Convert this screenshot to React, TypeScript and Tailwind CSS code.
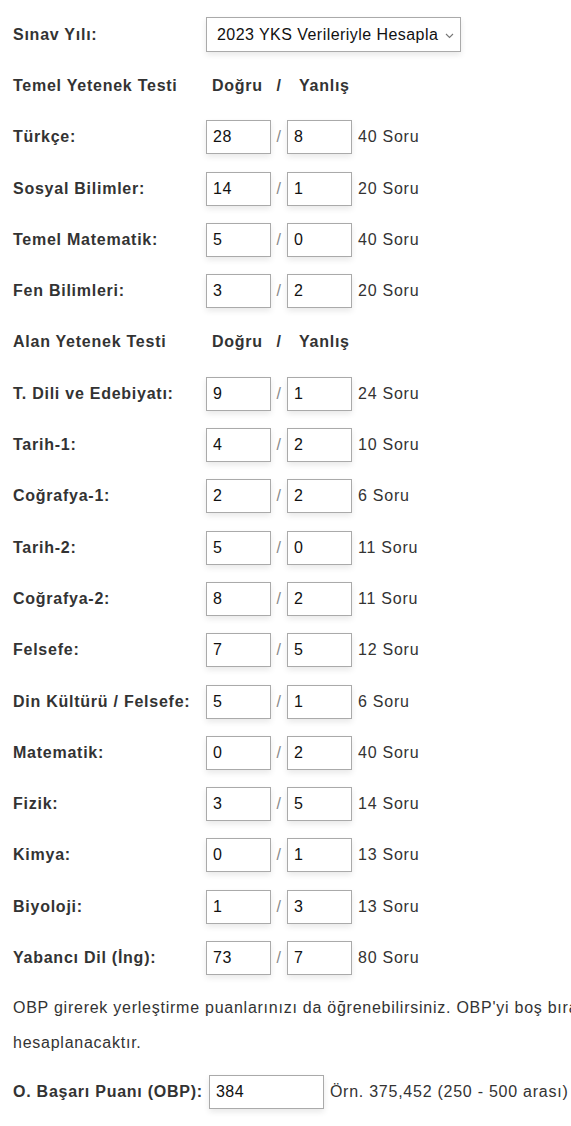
import React from "react";

type Row = { label: string; d: string; y: string; total: string };

const tyt: Row[] = [
  { label: "Türkçe:", d: "28", y: "8", total: "40 Soru" },
  { label: "Sosyal Bilimler:", d: "14", y: "1", total: "20 Soru" },
  { label: "Temel Matematik:", d: "5", y: "0", total: "40 Soru" },
  { label: "Fen Bilimleri:", d: "3", y: "2", total: "20 Soru" },
];

const ayt: Row[] = [
  { label: "T. Dili ve Edebiyatı:", d: "9", y: "1", total: "24 Soru" },
  { label: "Tarih-1:", d: "4", y: "2", total: "10 Soru" },
  { label: "Coğrafya-1:", d: "2", y: "2", total: "6 Soru" },
  { label: "Tarih-2:", d: "5", y: "0", total: "11 Soru" },
  { label: "Coğrafya-2:", d: "8", y: "2", total: "11 Soru" },
  { label: "Felsefe:", d: "7", y: "5", total: "12 Soru" },
  { label: "Din Kültürü / Felsefe:", d: "5", y: "1", total: "6 Soru" },
  { label: "Matematik:", d: "0", y: "2", total: "40 Soru" },
  { label: "Fizik:", d: "3", y: "5", total: "14 Soru" },
  { label: "Kimya:", d: "0", y: "1", total: "13 Soru" },
  { label: "Biyoloji:", d: "1", y: "3", total: "13 Soru" },
  { label: "Yabancı Dil (İng):", d: "73", y: "7", total: "80 Soru" },
];

const inputCls =
  "h-[34px] border border-[#aaaaaa] bg-white pl-[6px] text-[16px] tracking-[0.5px] text-[#111] outline-none shadow-[0_3px_6px_rgba(0,0,0,0.09)]";

function ScoreRow({ row }: { row: Row }) {
  return (
    <div className="flex h-[51.3px] items-center">
      <div className="w-[193px] shrink-0 font-bold">{row.label}</div>
      <input className={`${inputCls} w-[65px]`} value={row.d} readOnly />
      <span className="w-[16px] text-center text-[#888]">/</span>
      <input className={`${inputCls} w-[65px]`} value={row.y} readOnly />
      <span className="ml-[6px]">{row.total}</span>
    </div>
  );
}

function Header({ title }: { title: string }) {
  return (
    <div className="flex h-[51.3px] items-center font-bold">
      <div className="w-[193px] shrink-0">{title}</div>
      <span className="ml-[6px] w-[59px]">Doğru</span>
      <span className="w-[16px] text-center">/</span>
      <span className="ml-[12px]">Yanlış</span>
    </div>
  );
}

export default function App() {
  return (
    <div
      className="min-h-[1126px] w-full overflow-hidden bg-white text-[16px] tracking-[0.75px] text-[#333]"
      style={{ fontFamily: '"Liberation Sans", Arial, sans-serif' }}
    >
      <div className="pl-[13px] pt-[9px]">
        <div className="flex h-[51.3px] items-center">
          <div className="w-[193px] shrink-0 font-bold">Sınav Yılı:</div>
          <div className="relative flex h-[35px] w-[255px] items-center border border-[#aaaaaa] bg-white pl-[10px] tracking-[0.45px] text-[#111] shadow-[0_3px_6px_rgba(0,0,0,0.09)]">
            <span>2023 YKS Verileriyle Hesapla</span>
            <svg
              className="absolute right-[6px] top-[15px]"
              width="9"
              height="6"
              viewBox="0 0 9 6"
              fill="none"
            >
              <path d="M1 1l3.5 3.5L8 1" stroke="#777" strokeWidth="1.1" />
            </svg>
          </div>
        </div>

        <Header title="Temel Yetenek Testi" />
        {tyt.map((r) => (
          <ScoreRow key={r.label} row={r} />
        ))}
        <Header title="Alan Yetenek Testi" />
        {ayt.map((r) => (
          <ScoreRow key={r.label} row={r} />
        ))}

        <p className="mt-[6px] whitespace-nowrap leading-[35px]">
          OBP girerek yerleştirme puanlarınızı da öğrenebilirsiniz. OBP'yi boş bırakırsanız sadece ham puanlarınız
          <br />
          hesaplanacaktır.
        </p>

        <div className="mt-[7px] flex h-[51.3px] items-center whitespace-nowrap">
          <span className="font-bold">O. Başarı Puanı (OBP):</span>
          <input className={`${inputCls} ml-[6px] w-[115px]`} value="384" readOnly />
          <span className="ml-[6px]">Örn. 375,452 (250 - 500 arası)</span>
        </div>
      </div>
    </div>
  );
}
